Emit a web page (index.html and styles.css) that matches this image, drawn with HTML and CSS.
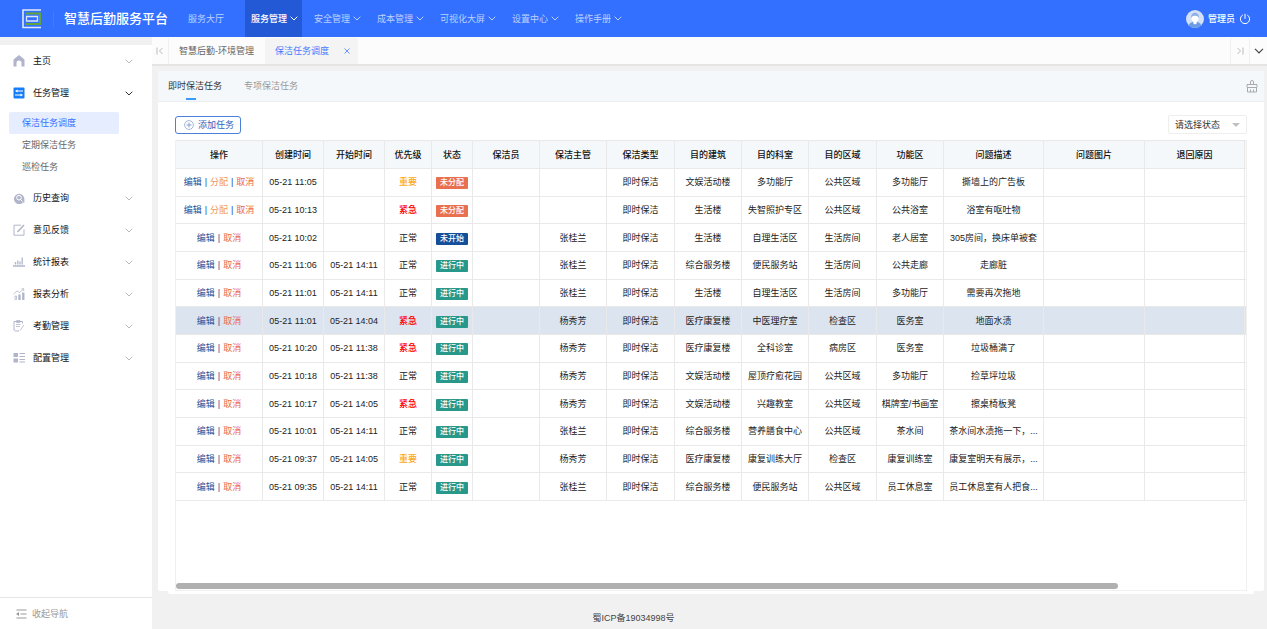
FILE: index.html
```html
<!DOCTYPE html>
<html lang="zh-CN">
<head>
<meta charset="utf-8">
<title>智慧后勤服务平台</title>
<link rel="stylesheet" href="styles.css">
</head>
<body>
<svg class="defs" aria-hidden="true">
  <symbol id="down" viewBox="0 0 8 5"><path d="M.7.7 4 4 7.3.7" fill="none" stroke="currentColor"/></symbol>
</svg>
<header class="topbar">
  <svg class="logo" viewBox="0 0 20 20"><path d="M19 1H1v17.500h18" fill="none" stroke="#dfe9fb" stroke-width="1.600"/><path d="M3.500 4.500h14.500v10.500H3.500" fill="none" stroke="#62a53f" stroke-width="2"/><path d="M15.500 7.500H4.500v4.500h11z" fill="#3370ff" stroke="#dbe6fb" stroke-width="1.300"/></svg>
  <h1 class="brand">智慧后勤服务平台</h1>
  <nav class="nav">
    <a class="nav-item nav-first" href="#">服务大厅</a>
    <a class="nav-item active" href="#">服务管理<svg class="chev"><use href="#down"/></svg></a>
    <a class="nav-item" href="#">安全管理<svg class="chev"><use href="#down"/></svg></a>
    <a class="nav-item" href="#">成本管理<svg class="chev"><use href="#down"/></svg></a>
    <a class="nav-item" href="#">可视化大屏<svg class="chev"><use href="#down"/></svg></a>
    <a class="nav-item" href="#">设置中心<svg class="chev"><use href="#down"/></svg></a>
    <a class="nav-item" href="#">操作手册<svg class="chev"><use href="#down"/></svg></a>
  </nav>
  <div class="user">
    <svg class="avatar" viewBox="0 0 18 18"><circle cx="9" cy="9" r="9" fill="#d3e0f5"/><path d="M2.500 15.200Q5 11.500 9 11.500t6.500 3.700A9 9 0 0 1 2.500 15.200z" fill="#6d9ce6"/><path d="M5 8c-.5-7 8.500-7 8 0z" fill="#8fb1e8"/><path d="M5.500 7Q9 4.500 12.500 7v2.500L10.700 12v1.500L9 14.500l-1.700-1V12L5.500 9.500z" fill="#fff"/></svg>
    <span>管理员</span>
    <button class="icon-btn" aria-label="退出"><svg class="power" viewBox="0 0 12 12"><path d="M3.800 2a4.600 4.600 0 1 0 4.400 0M6 .8v5" fill="none" stroke="currentColor"/></svg></button>
  </div>
</header>
<div class="shell">
  <aside class="side">
    <nav class="side-nav">
      <a class="side-item" href="#"><svg class="si" viewBox="0 0 12 12"><path d="M6 0 .5 4.500V11q0 .5.5.5h2.500V8a2.500 2.500 0 0 1 5 0v3.500H11q.5 0 .5-.5V4.500z" fill="currentColor"/></svg><span>主页</span><svg class="chev"><use href="#down"/></svg></a>
      <a class="side-item open" href="#"><svg class="si" viewBox="0 0 12 12"><rect x=".5" y=".5" width="11" height="11" rx="1" fill="#147dfa"/><path d="M3.500 4H10M2 8h6.500" stroke="#fff" fill="none"/><path d="M4.500 2.500v3L2 4zM7.500 6.500v3L10 8z" fill="#fff"/></svg><span>任务管理</span><svg class="chev"><use href="#down"/></svg></a>
      <div class="sub">
        <a class="sub-item current" href="#">保洁任务调度</a>
        <a class="sub-item" href="#">定期保洁任务</a>
        <a class="sub-item" href="#">巡检任务</a>
      </div>
      <a class="side-item" href="#"><svg class="si" viewBox="0 0 12 12"><path d="M10 10.500A5.200 5.200 0 1 1 11.300 6L11.500 10.500z" fill="currentColor"/><circle cx="6" cy="5.700" r="2.300" fill="none" stroke="#fff"/><path d="m7.500 7.500 2 2" stroke="#fff"/></svg><span>历史查询</span><svg class="chev"><use href="#down"/></svg></a>
      <a class="side-item" href="#"><svg class="si" viewBox="0 0 12 12"><path d="M8 1.200H1v10h10V5.500" fill="none" stroke="currentColor"/><path d="M4.500 8 11 1" stroke="currentColor" stroke-width="1.600"/></svg><span>意见反馈</span><svg class="chev"><use href="#down"/></svg></a>
      <a class="side-item" href="#"><svg class="si" viewBox="0 0 12 12"><path d="M0 10h12" stroke="currentColor" stroke-width="1.500"/><path d="M2.500 8.500V6M4.800 8.500V4.500M7 8.500V5.500M9.200 8.500V1.500" stroke="currentColor" stroke-width="1.300"/></svg><span>统计报表</span><svg class="chev"><use href="#down"/></svg></a>
      <a class="side-item" href="#"><svg class="si" viewBox="0 0 12 12"><path d="M.5 6 4 3l2.500 1.500L10.500 1M8.500.800h2.200V3" fill="none" stroke="currentColor" stroke-width=".8"/><path d="M2 11.500V8h1.500v3.500z" fill="none" stroke="currentColor" stroke-width=".8"/><path d="M6.500 12V6.500M10.300 12V4.500" stroke="currentColor" stroke-width="2.300"/></svg><span>报表分析</span><svg class="chev"><use href="#down"/></svg></a>
      <a class="side-item" href="#"><svg class="si" viewBox="0 0 12 12"><path d="M9.500 3.500v-2H1v8.500l1.500 1H6" fill="none" stroke="currentColor"/><path d="M3.500.500h3.500v2H3.500zM3 4.500h4.500M3 6.500h4M7 10.500 11 5" fill="none" stroke="currentColor" stroke-width=".8"/></svg><span>考勤管理</span><svg class="chev"><use href="#down"/></svg></a>
      <a class="side-item" href="#"><svg class="si" viewBox="0 0 12 12"><path d="M.5 1h4.500v4H.5zM.5 6.500h4.500v4H.5z" fill="currentColor"/><path d="M6.500 1.500H12M6.500 4.500H12M6.500 7.500H12M6.500 10H12" stroke="currentColor" stroke-width="1.200"/></svg><span>配置管理</span><svg class="chev"><use href="#down"/></svg></a>
    </nav>
    <button class="collapse"><svg class="ci" viewBox="0 0 11 10"><path d="M.5 1h10M4.500 5h6M.5 9h10" stroke="currentColor" fill="none"/><path d="m0 5 3-2v4z" fill="currentColor"/></svg>收起导航</button>
  </aside>
  <main class="main">
    <div class="tabs">
      <button class="edge" aria-label="首页签"><svg class="edge-icon" viewBox="0 0 8 8"><path d="M1 .5v7M6.500 1l-3 3 3 3" fill="none" stroke="currentColor"/></svg></button>
      <a class="tab" href="#">智慧后勤-环境管理</a>
      <a class="tab on" href="#">保洁任务调度<svg class="close" viewBox="0 0 6 6"><path d="m.5.500 5 5M5.500.500l-5 5" stroke="currentColor" stroke-width=".8"/></svg></a>
      <button class="edge last" aria-label="末页签"><svg class="edge-icon" viewBox="0 0 8 8"><path d="M7 .5v7M1.500 1l3 3-3 3" fill="none" stroke="currentColor"/></svg></button>
      <button class="edge more" aria-label="更多"><svg class="more-icon"><use href="#down"/></svg></button>
    </div>
    <section class="card">
      <div class="card-head">
        <button class="view on">即时保洁任务</button>
        <button class="view">专项保洁任务</button>
        <button class="icon-btn clean" aria-label="清理"><svg class="brush" viewBox="0 0 12 13"><path d="M4.500 4.500V2q0-1.500 1.500-1.500T7.500 2v2.500M1 7V4.500h10V7M1 7.500h10M1.500 7.500v4.500h9V7.500M4.500 9.500V12M7.500 9.500V12" fill="none" stroke="currentColor"/></svg></button>
      </div>
      <div class="card-body">
        <div class="tools">
          <button class="add"><svg class="plus" viewBox="0 0 10 10"><circle cx="5" cy="5" r="4.400" fill="none" stroke="currentColor" stroke-width=".7"/><path d="M5 2.500v5M2.500 5h5" stroke="currentColor" stroke-width=".9"/></svg>添加任务</button>
          <div class="select-wrap"><select class="select" aria-label="状态"><option>请选择状态</option></select><svg class="caret" viewBox="0 0 8 4"><path d="M0 0h8L4 4z" fill="#c0c0c0"/></svg></div>
        </div>
        <div class="table-wrap">
          <table class="grid">
            <colgroup><col class="w87"><col class="w61"><col class="w61"><col class="w47"><col class="w41"><col class="w67"><col class="w67"><col class="w68"><col class="w67"><col class="w67"><col class="w68"><col class="w67"><col class="w100"><col class="w101"><col class="w100"><col></colgroup>
            <thead><tr><th>操作</th><th>创建时间</th><th>开始时间</th><th>优先级</th><th>状态</th><th>保洁员</th><th>保洁主管</th><th>保洁类型</th><th>目的建筑</th><th>目的科室</th><th>目的区域</th><th>功能区</th><th>问题描述</th><th>问题图片</th><th>退回原因</th><th></th></tr></thead>
            <tbody id="rows"></tbody>
          </table>
          <div class="track"><div class="thumb"></div></div>
        </div>
      </div>
    </section>
    <footer class="foot">蜀ICP备19034998号</footer>
  </main>
</div>
<script src="app.js"></script>
</body>
</html>
```
FILE: app.js
```js
const tasks = [
  ['05-21 11:05', '', '重要', '未分配', '', '文娱活动楼', '多功能厅', '公共区域', '多功能厅', '撕墙上的广告板'],
  ['05-21 10:13', '', '紧急', '未分配', '', '生活楼', '失智照护专区', '公共区域', '公共浴室', '浴室有呕吐物'],
  ['05-21 10:02', '', '正常', '未开始', '张桂兰', '生活楼', '自理生活区', '生活房间', '老人居室', '305房间，换床单被套'],
  ['05-21 11:06', '05-21 14:11', '正常', '进行中', '张桂兰', '综合服务楼', '便民服务站', '生活房间', '公共走廊', '走廊脏'],
  ['05-21 11:01', '05-21 14:11', '正常', '进行中', '张桂兰', '生活楼', '自理生活区', '生活房间', '多功能厅', '需要再次拖地'],
  ['05-21 11:01', '05-21 14:04', '紧急', '进行中', '杨秀芳', '医疗康复楼', '中医理疗室', '检查区', '医务室', '地面水渍'],
  ['05-21 10:20', '05-21 11:38', '紧急', '进行中', '杨秀芳', '医疗康复楼', '全科诊室', '病房区', '医务室', '垃圾桶满了'],
  ['05-21 10:18', '05-21 11:38', '正常', '进行中', '杨秀芳', '文娱活动楼', '屋顶疗愈花园', '公共区域', '多功能厅', '捡草坪垃圾'],
  ['05-21 10:17', '05-21 14:05', '紧急', '进行中', '杨秀芳', '文娱活动楼', '兴趣教室', '公共区域', '棋牌室/书画室', '擦桌椅板凳'],
  ['05-21 10:01', '05-21 14:11', '正常', '进行中', '张桂兰', '综合服务楼', '营养膳食中心', '公共区域', '茶水间', '茶水间水渍拖一下，...'],
  ['05-21 09:37', '05-21 14:05', '重要', '进行中', '杨秀芳', '医疗康复楼', '康复训练大厅', '检查区', '康复训练室', '康复室明天有展示，...'],
  ['05-21 09:35', '05-21 14:11', '正常', '进行中', '张桂兰', '综合服务楼', '便民服务站', '公共区域', '员工休息室', '员工休息室有人把食...']
];
const selectedRow = 5;
const levelClass = { 重要: 'major', 紧急: 'urgent', 正常: 'normal' };
const stateClass = { 未分配: 'unassigned', 未开始: 'pending', 进行中: 'running' };

document.getElementById('rows').innerHTML = tasks.map((t, i) => {
  const [created, started, level, state, lead, ...place] = t;
  const assign = state === '未分配' ? '<i>|</i><a class="assign" href="#">分配</a>' : '';
  const cells = [
    `<a class="edit" href="#">编辑</a>${assign}<i>|</i><a class="cancel" href="#">取消</a>`,
    created, started,
    `<span class="${levelClass[level]}">${level}</span>`,
    `<span class="badge ${stateClass[state]}">${state}</span>`,
    '', lead, '即时保洁', ...place, '', '', ''
  ];
  return `<tr class="${i === selectedRow ? 'selected' : ''}">${cells.map(c => `<td>${c}</td>`).join('')}</tr>`;
}).join('');
```
FILE: styles.css
```css
* { box-sizing: border-box; }
body {
  margin: 0;
  min-height: 100vh;
  display: flex;
  flex-direction: column;
  font: 9px/14px "Liberation Sans", "Noto Sans CJK SC", sans-serif;
  color: #333;
  background: #f1f1f1;
}
a { color: inherit; text-decoration: none; }
button, select { font: inherit; color: inherit; border: 0; background: none; padding: 0; margin: 0; }
svg { display: block; flex: none; }
.defs { position: absolute; width: 0; height: 0; }
.chev { width: 8px; height: 5px; }

.topbar { display: flex; align-items: center; height: 37px; padding-left: 22px; background: #3370ff; color: #fff; }
.logo { width: 20px; height: 20px; }
.brand { margin: 0 0 0 11px; padding-left: 10px; border-left: 1px solid #3c7cff; font-size: 13px; line-height: 16px; font-weight: 500; }
.nav { display: flex; align-self: stretch; gap: 6px; margin-left: 14px; color: #bdd2ff; }
.nav-item { display: flex; align-items: center; gap: 3px; padding: 0 4px 0 6px; }
.nav-first { margin-right: 11px; }
.nav-item.active { background: #2459d6; color: #fff; font-weight: 500; }
.user { display: flex; align-items: center; gap: 4px; margin-left: auto; padding-right: 16px; font-weight: 500; }
.avatar { width: 18px; height: 18px; }
.power { width: 12px; height: 12px; }

.shell { flex: 1; display: flex; }
.side { flex: none; width: 152px; margin-top: 8px; display: flex; flex-direction: column; background: #fff; color: #111; }
.side-nav { flex: 1; }
.side-item { display: flex; align-items: center; height: 32px; padding: 0 19px 0 13px; gap: 8px; }
.side-item .chev { margin-left: auto; color: #bbb; }
.side-item.open .chev { color: #333; }
.si { width: 12px; height: 12px; color: #b0b5cb; }
.sub { padding: 3px 33px 4px 9px; color: #666; }
.sub-item { display: block; padding-left: 13px; line-height: 22px; border-radius: 2px; }
.sub-item.current { background: #e5edff; color: #3370ff; }
.collapse { display: flex; align-items: center; gap: 5px; height: 32px; padding-left: 16px; border-top: 1px solid #e4e4e4; color: #999; }
.ci { width: 11px; height: 10px; }

.main { flex: 1; min-width: 0; display: flex; flex-direction: column; }
.tabs { display: flex; height: 29px; padding-top: 1px; background: #fcfcfc; border-bottom: 2px solid #e4e4e4; color: #666; }
.tab { display: flex; align-items: center; padding: 0 11px 0 10px; }
.tab.on { gap: 15px; padding-right: 8px; background: #f4f4f4; color: #3f7bff; }
.close { width: 6px; height: 6px; }
.edge { display: flex; align-items: center; justify-content: center; width: 17px; color: #bbb; border-right: 1px solid #f0f0f0; }
.edge.last { width: 20px; margin-left: auto; border-left: 1px solid #f0f0f0; }
.edge.more { color: #444; border: 0; }
.edge-icon { width: 8px; height: 8px; }
.more-icon { width: 10px; height: 6px; }

.card { flex: 1; display: flex; flex-direction: column; margin: 5px 3px 0 6px; background: #fff; border-radius: 2px; }
.card-head { display: flex; height: 31px; padding: 0 6px 0 10px; gap: 22px; background: #f4f8fb; border-bottom: 1px solid #ebeef0; }
.view { position: relative; color: #999; }
.view.on { color: #333; }
.view.on::after { content: ""; position: absolute; left: 18px; bottom: 1px; width: 10px; height: 2px; background: #3a9bfa; }
.clean { margin-left: auto; color: #aaa; }
.brush { width: 12px; height: 13px; }
.card-body { flex: 1; display: flex; flex-direction: column; margin: 0 10px -3px; padding: 13px 7px 3px; background: #fff; border-radius: 2px; }
.tools { display: flex; justify-content: space-between; align-items: center; margin-bottom: 6px; }
.add { display: flex; align-items: center; gap: 4px; height: 18px; padding: 0 6px 0 8px; border: 1px solid #4a80d9; border-radius: 3px; color: #2e62bd; }
.plus { width: 10px; height: 10px; color: #7d99cc; }
.select-wrap { position: relative; }
.select { display: block; width: 79px; height: 19px; padding-left: 6px; border: 1px solid #eee; border-radius: 2px; background: #fff; appearance: none; }
.caret { position: absolute; right: 7px; top: 8px; width: 8px; height: 4px; }

.table-wrap { position: relative; flex: 1; overflow: hidden; border: 1px solid #f0f0f0; border-top: 0; }
.grid { table-layout: fixed; width: 1218px; height: 361px; margin-left: -1px; border-collapse: collapse; text-align: center; color: #222; }
.grid th, .grid td { padding: 0; border: 1px solid #e9e9e9; white-space: nowrap; overflow: hidden; }
.grid th { height: 28px; background: #f4f8fb; font-weight: 500; color: #111; }
.grid i { margin: 0 3px; font-style: normal; color: #1d4f97; }
.w41 { width: 41px; }
.w47 { width: 47px; }
.w61 { width: 61px; }
.w67 { width: 67px; }
.w68 { width: 68px; }
.w87 { width: 87px; }
.w100 { width: 100px; }
.w101 { width: 101px; }
.selected { background: #dce4f0; }
.edit { color: #1d4f97; }
.assign { color: #f0965c; }
.cancel { color: #e8684a; }
.major { color: #ffa71a; font-weight: 500; }
.urgent { color: #f00; font-weight: 500; }
.badge { display: inline-block; padding: 0 4px; font-size: 8px; line-height: 12px; border-radius: 1px; color: #fff; font-weight: 500; }
.unassigned { background: #e8704f; }
.pending { background: #174e98; }
.running { background: #27988a; }
.track { position: absolute; left: 0; right: 0; bottom: 1px; height: 6px; }
.thumb { width: 88%; height: 100%; border-radius: 3px; background: #b0b0b0; }

.foot { padding: 20px 152px 4px 0; text-align: center; color: #444; }
```
